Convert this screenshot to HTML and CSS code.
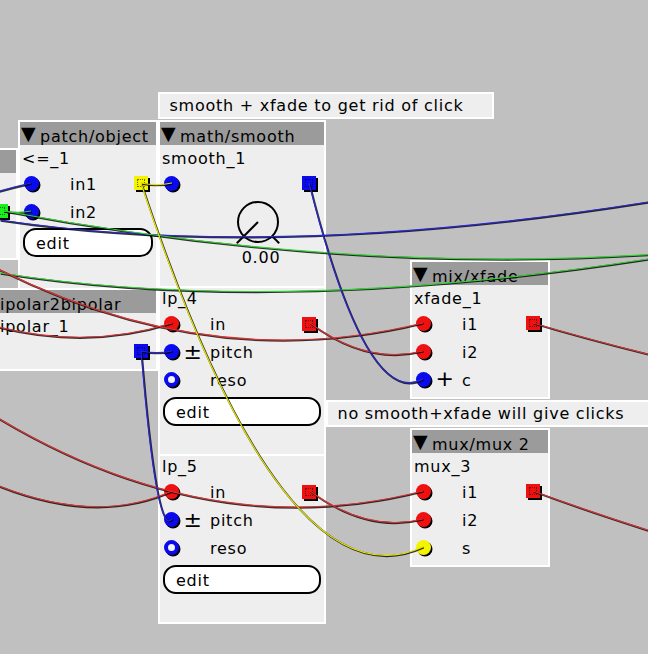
FILE: index.html
```html
<!DOCTYPE html>
<html>
<head>
<meta charset="utf-8">
<title>patch</title>
<link rel="stylesheet" href="styles.css">
</head>
<body>
<div class="canvas">

  <div class="obj o-left">
    <div class="hdr"></div>
    <div class="inst"></div>
    <div class="row"><span class="out p-int"></span></div>
  </div>

  <div class="obj o-patch">
    <div class="hdr"><span class="tri">▼</span>patch/object</div>
    <div class="inst">&lt;=_1</div>
    <div class="row"><span class="in p-frac"></span><span class="sign"></span><span class="lbl">in1</span><span class="out p-bool"></span></div>
    <div class="row"><span class="in p-frac"></span><span class="sign"></span><span class="lbl">in2</span></div>
    <div class="edit">edit</div>
  </div>

  <div class="obj o-bip">
    <div class="hdr plain">ipolar2bipolar</div>
    <div class="inst plain">ipolar_1</div>
    <div class="row"><span class="out p-frac"></span></div>
  </div>

  <div class="obj o-lp5">
    <div class="inst cut">lp_5</div>
    <div class="row"><span class="in p-audio"></span><span class="sign"></span><span class="lbl">in</span><span class="out p-audio"></span></div>
    <div class="row"><span class="in p-frac"></span><span class="sign">±</span><span class="lbl">pitch</span></div>
    <div class="row"><span class="in p-ring"></span><span class="sign"></span><span class="lbl">reso</span></div>
    <div class="edit">edit</div>
  </div>

  <div class="obj o-lp4">
    <div class="inst cut">lp_4</div>
    <div class="row"><span class="in p-audio"></span><span class="sign"></span><span class="lbl">in</span><span class="out p-audio"></span></div>
    <div class="row"><span class="in p-frac"></span><span class="sign">±</span><span class="lbl">pitch</span></div>
    <div class="row"><span class="in p-ring"></span><span class="sign"></span><span class="lbl">reso</span></div>
    <div class="edit">edit</div>
  </div>

  <div class="obj o-smooth">
    <div class="hdr"><span class="tri">▼</span>math/smooth</div>
    <div class="inst">smooth_1</div>
    <div class="row"><span class="in p-frac"></span><span class="out p-frac"></span></div>
    <div class="knob">
      <svg class="dial" width="48" height="48" viewBox="0 0 48 48">
        <circle cx="24" cy="24" r="20" fill="none" stroke="#000" stroke-width="2"/>
        <line x1="24" y1="24" x2="2.8" y2="45.2" stroke="#000" stroke-width="2"/>
        <line x1="38.1" y1="38.1" x2="45.2" y2="45.2" stroke="#000" stroke-width="2"/>
      </svg>
      <div class="kval">0.00</div>
    </div>
  </div>

  <div class="comment c1">smooth + xfade to get rid of click</div>

  <div class="obj o-xfade">
    <div class="hdr"><span class="tri">▼</span>mix/xfade</div>
    <div class="inst">xfade_1</div>
    <div class="row"><span class="in p-audio"></span><span class="sign"></span><span class="lbl">i1</span><span class="out p-audio"></span></div>
    <div class="row"><span class="in p-audio"></span><span class="sign"></span><span class="lbl">i2</span></div>
    <div class="row"><span class="in p-frac"></span><span class="sign">+</span><span class="lbl">c</span></div>
  </div>

  <div class="comment c2">no smooth+xfade will give clicks</div>

  <div class="obj o-mux">
    <div class="hdr"><span class="tri">▼</span>mux/mux 2</div>
    <div class="inst">mux_3</div>
    <div class="row"><span class="in p-audio"></span><span class="sign"></span><span class="lbl">i1</span><span class="out p-audio"></span></div>
    <div class="row"><span class="in p-audio"></span><span class="sign"></span><span class="lbl">i2</span></div>
    <div class="row"><span class="in p-bool"></span><span class="sign"></span><span class="lbl">s</span></div>
  </div>

  <svg class="wires" width="648" height="654" viewBox="0 0 648 654">
    <defs>
      <path id="y1" d="M141,183 Q156.5,186.1 172,183"/>
      <path id="y2" d="M141,183 Q282,611.6 423,547"/>
      <path id="b1" d="M-30,200 Q0,190 31,183"/>
      <path id="b2" d="M0,220 Q276,261 648,202"/>
      <path id="b3" d="M309,183 Q366,410 423,379"/>
      <path id="b4" d="M141,351 Q156.5,354.1 172,351"/>
      <path id="b5" d="M141,351 Q156.5,538.9 172,519"/>
      <path id="g1" d="M4,211 Q17.5,213.7 31,211"/>
      <path id="g2" d="M4,211 Q400,285 760,245"/>
      <path id="g3" d="M0,273 Q276,316 648,259"/>
      <path id="r1" d="M-110,205 Q156.5,388.1 423,323"/>
      <path id="r2" d="M-20,322 Q80,352 172,323"/>
      <path id="r3" d="M310,323 Q366.5,365.1 423,351"/>
      <path id="r4" d="M533,323 Q590,340 660,357"/>
      <path id="r5" d="M-100,350 Q161.5,557.4 423,491"/>
      <path id="r6" d="M-20,478 Q90,528 172,491"/>
      <path id="r7" d="M310,491 Q366.5,533.1 423,519"/>
      <path id="r8" d="M533,491 Q590,512 660,534"/>
    </defs>
    <g class="shadow" transform="translate(0.7 0.7)">
      <use href="#b2"/><use href="#g2"/><use href="#g3"/><use href="#b1"/><use href="#g1"/>
      <use href="#r1"/><use href="#r2"/><use href="#r3"/><use href="#r4"/>
      <use href="#r5"/><use href="#r6"/><use href="#r7"/><use href="#r8"/>
      <use href="#b3"/><use href="#b4"/><use href="#b5"/>
      <use href="#y1"/><use href="#y2"/>
    </g>
    <g class="w-blue"><use href="#b2"/><use href="#b1"/></g>
    <g class="w-green"><use href="#g2"/><use href="#g3"/><use href="#g1"/></g>
    <g class="w-red">
      <use href="#r1"/><use href="#r2"/><use href="#r3"/><use href="#r4"/>
      <use href="#r5"/><use href="#r6"/><use href="#r7"/><use href="#r8"/>
    </g>
    <g class="w-blue"><use href="#b3"/><use href="#b4"/><use href="#b5"/></g>
    <g class="w-yellow"><use href="#y1"/><use href="#y2"/></g>
  </svg>
</div>
</body>
</html>
```

FILE: styles.css
```css
html, body {
  margin: 0;
  padding: 0;
}

body {
  background: #c0c0c0;
  font-family: "DejaVu Sans", "Liberation Sans", sans-serif;
  font-size: 16px;
  letter-spacing: 0.75px;
  color: #000;
}

.canvas {
  position: relative;
  width: 648px;
  height: 654px;
  overflow: hidden;
  background: #c0c0c0;
}

/* objects on the free patch canvas */
.obj {
  position: absolute;
  box-sizing: border-box;
  border: 2px solid #fff;
  background: #eeeeee;
  display: flex;
  flex-direction: column;
  white-space: nowrap;
}

.o-left   { left: -130px; top: 148px; width: 148px; height: 112px; }
.o-patch  { left: 18px;   top: 120px; width: 140px; height: 170px; }
.o-bip    { left: -2px;   top: 288px; width: 160px; height: 83px; }
.o-smooth { left: 158px;  top: 120px; width: 168px; height: 168px; }
.o-lp4    { left: 158px;  top: 286px; width: 168px; height: 170px; }
.o-lp5    { left: 158px;  top: 454px; width: 168px; height: 170px; }
.o-xfade  { left: 410px;  top: 260px; width: 140px; height: 139px; }
.o-mux    { left: 410px;  top: 428px; width: 140px; height: 139px; }

.hdr {
  flex: none;
  height: 23px;
  line-height: 30px;
  background: #9b9b9b;
  padding-left: 1px;
}

.hdr.plain { padding-left: 0; }

.tri {
  display: inline-block;
  width: 19px;
  font-size: 19px;
  line-height: 12px;
  letter-spacing: 0;
  vertical-align: 2px;
}

.inst {
  flex: none;
  height: 24px;
  line-height: 27px;
  padding-left: 2px;
}

.inst.plain { padding-left: 0; }

.inst.cut {
  height: 21.5px;
  line-height: 22px;
}

.row {
  flex: none;
  height: 28px;
  display: flex;
  align-items: center;
}

.in {
  flex: none;
  width: 15px;
  height: 15px;
  margin-left: 3.5px;
  border-radius: 50%;
  box-sizing: border-box;
  box-shadow: 1.5px 1.5px 0 #000;
}

.sign {
  flex: none;
  width: 31.5px;
  box-sizing: border-box;
  padding-left: 5px;
  font-size: 22px;
  line-height: 20px;
  letter-spacing: 0;
}

.lbl {
  padding-top: 2px;
}

.out {
  flex: none;
  position: relative;
  width: 14px;
  height: 14px;
  margin-left: auto;
  margin-right: 8px;
  box-shadow: 2px 2px 0 #000;
}

.out::after {
  content: "";
  position: absolute;
  left: 3px;
  top: 3px;
  width: 6px;
  height: 6px;
  border: 1px dotted rgba(0, 0, 0, 0.55);
}

.p-frac  { background: #0a0aee; }
.p-audio { background: #f01010; }
.p-bool  { background: #f4f400; }
.p-int   { background: #1cf01c; }
.p-ring  { background: #f4f4f4; border: 4px solid #0a0aee; }

.edit {
  flex: none;
  height: 29px;
  margin: 3px 3px 0;
  box-sizing: border-box;
  border: 2px solid #000;
  border-radius: 13px;
  background: #fff;
  padding-left: 11px;
  line-height: 27px;
}

.knob {
  flex: none;
  width: 48px;
  margin-left: 74px;
  margin-top: 1px;
  display: flex;
  flex-direction: column;
}

.dial { display: block; }

.kval {
  margin-top: 2px;
  line-height: 20px;
  padding-left: 6px;
  text-align: center;
}

.comment {
  position: absolute;
  box-sizing: border-box;
  height: 27px;
  border: 2px solid #fff;
  background: #eeeeee;
  line-height: 23px;
  padding-left: 9.5px;
  white-space: nowrap;
}

.c1 { left: 158px; top: 92px;  width: 336px; }
.c2 { left: 326px; top: 400px; width: 340px; }

/* wires overlay */
.wires {
  position: absolute;
  left: 0;
  top: 0;
  pointer-events: none;
  fill: none;
}

.wires use { fill: none; }

.shadow { stroke: #000; stroke-opacity: 0.8; stroke-width: 1.9px; }
.w-red    { stroke: #d83434; stroke-width: 1.2px; }
.w-blue   { stroke: #2828d8; stroke-width: 1.2px; }
.w-green  { stroke: #34d034; stroke-width: 1.2px; }
.w-yellow { stroke: #e4e400; stroke-width: 1.2px; }
```
